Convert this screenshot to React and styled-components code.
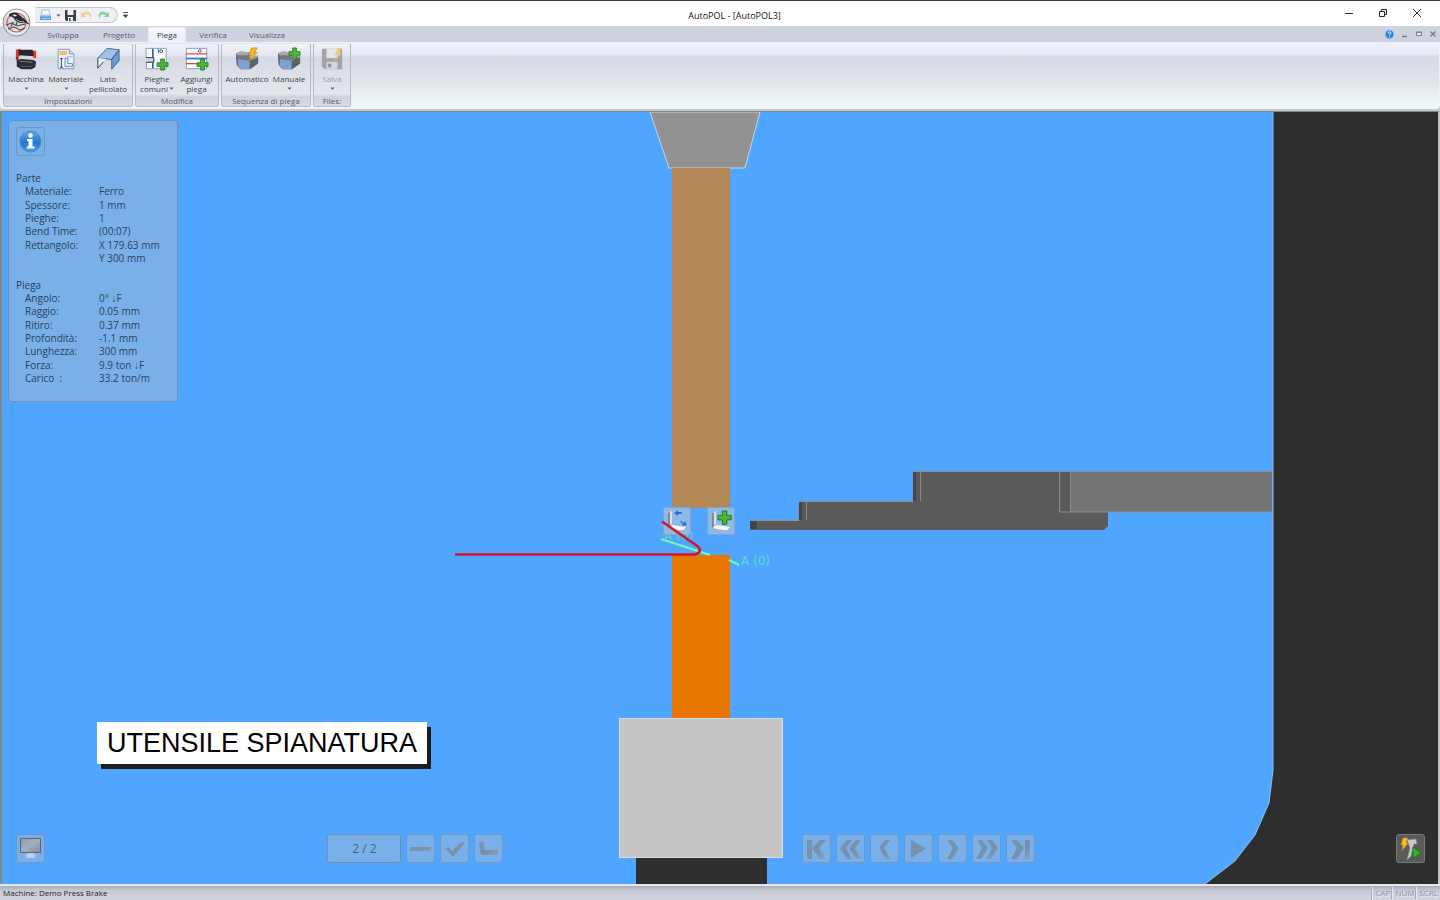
import React from "react";
import styled, { createGlobalStyle } from "styled-components";

const Global = createGlobalStyle`
  * { box-sizing: border-box; }
  body { margin: 0; font-family: "Open Sans", "Noto Sans", sans-serif; color: #2c2f36; }
  button { font: inherit; color: inherit; padding: 0; margin: 0; background: none; border: 0; cursor: pointer; }
  h1, h2, dl, dd, dt, p { margin: 0; font: inherit; }
  svg { display: block; flex: none; }
`;

const Window = styled.div`
  display: flex;
  flex-direction: column;
  min-height: 100vh;
  background: #c6c9d2;
`;

const Header = styled.header`
  display: grid;
  grid-template-columns: 35px 1fr;
  grid-template-rows: 26px 15px;
  border-top: 1px solid #3a3a3c;
  background: linear-gradient(#ffffff 25px, #cfd3df 25px);
`;

const AppButton = styled.button`
  grid-row: 1 / 3;
  display: grid;
  place-items: start;
  padding: 7px 0 0 2px;
`;

const TitleBar = styled.div`
  display: grid;
  grid-template-columns: 1fr auto 1fr;
  align-items: center;
  padding-top: 2px;
`;

const Title = styled.h1`
  font-size: 9px;
  line-height: 12px;
  color: #111;
  padding-top: 2px;
  margin-left: -6px;
`;

const QuickBar = styled.div`
  display: flex;
  align-items: center;
  gap: 5px;
`;

const QuickPill = styled.div`
  display: flex;
  align-items: center;
  gap: 4px;
  height: 16px;
  padding: 0 7px 0 4px;
  border: 1px solid #c3c6cd;
  border-left: 0;
  border-radius: 0 8px 8px 0;
  background: #eef0f5;
`;

const WindowControls = styled.div`
  display: flex;
  justify-content: flex-end;
  padding: 0 17px 4px 0;
  gap: 22px;
`;

const TabRow = styled.div`
  display: flex;
  justify-content: space-between;
  align-items: stretch;
  padding-right: 3px;
`;

const Tabs = styled.nav`
  display: flex;
  padding-left: 1px;
`;

const Tab = styled.button`
  width: ${(p) => p.$width}px;
  font-size: 8px;
  line-height: 12px;
  padding-bottom: 1px;
  color: ${(p) => (p.$active ? "#33363d" : "#565b68")};
  border: 1px solid ${(p) => (p.$active ? "#e4e9f2" : "transparent")};
  border-bottom: 0;
  border-radius: 2px 2px 0 0;
  background: ${(p) => (p.$active ? "linear-gradient(#f7fafd, #eaf0f8)" : "none")};
`;

const DocControls = styled.div`
  display: flex;
  align-items: center;
  gap: 6px;
  padding-bottom: 1px;
`;

const Ribbon = styled.div`
  display: flex;
  gap: 2px;
  height: 67px;
  padding: 0 2px;
  border: 1px solid #eef1f6;
  border-radius: 0 0 3px 3px;
  background: linear-gradient(#eff1f9 0, #e6e9f3 11px, #d5d9e4 14px, #dfe4e9 38px, #f2fafa 65px);
`;

const Group = styled.section`
  display: flex;
  flex-direction: column;
  justify-content: space-between;
  width: ${(p) => p.$width}px;
  height: 64px;
  border: 1px solid #b4b8c1;
  border-top-color: #e2e5ec;
  border-radius: 3px;
  background: linear-gradient(#f1f3fa 0, #e3e6ef 11px, #d5d9e3 14px, #e4e8ec 50px, #cdd1da 53px, #d9dce3);
`;

const GroupTools = styled.div`
  display: flex;
  justify-content: center;
`;

const GroupLabel = styled.h2`
  font-size: 8px;
  line-height: 11px;
  text-align: center;
  color: #555a66;
`;

const Tool = styled.button`
  display: flex;
  flex-direction: column;
  align-items: center;
  width: ${(p) => p.$width}px;
  font-size: 8px;
  line-height: 10px;
  padding-top: 3px;
  white-space: nowrap;
  color: ${(p) => (p.$muted ? "#9a9ea8" : "#3d4250")};
  & > svg { width: 24px; height: 24px; margin-bottom: 3px; }
`;

const SecondLine = styled.span`
  display: flex;
  align-items: center;
  height: 9px;
  line-height: 9px;
  gap: 1px;
`;

const Workspace = styled.main`
  flex: 1;
  display: grid;
  grid-template-rows: minmax(0, 1fr);
  grid-template-columns: minmax(0, 1fr);
  margin-top: 2px;
  border: solid #7f8791;
  border-width: 1px 2px 0 2px;
  border-right-color: #c4c6cc;
  background: #50a6ff;
`;

const Canvas = styled.div`
  grid-area: 1 / 1;
  display: grid;
  position: relative;
  & > svg { width: 100%; height: 100%; }
`;

const PieceLayer = styled.svg`
  position: absolute;
  inset: 0;
  pointer-events: none;
`;

const CanvasButton = styled.button`
  position: absolute;
  top: ${(p) => p.$top}px;
  left: calc(50% + ${(p) => p.$dx}px);
  width: 28px;
  height: 28px;
  border: 1px solid #86a5c8;
  border-radius: 2px;
  background: rgba(155, 190, 228, 0.8);
`;

const Overlay = styled.div`
  grid-area: 1 / 1;
  z-index: 1;
  display: flex;
  flex-direction: column;
  align-items: flex-start;
  padding: 8px 13px 21px 6px;
  pointer-events: none;
  & button { pointer-events: auto; }
`;

const InfoPanel = styled.section`
  display: flex;
  flex-direction: column;
  width: 170px;
  height: 282px;
  padding: 6px 7px 16px;
  border: 1px solid #7390b2;
  border-radius: 4px;
  background: #7ab0e9;
  font-size: 10px;
  color: #29415c;
`;

const GlassButton = styled.button`
  display: grid;
  place-items: center;
  width: 29px;
  height: 29px;
  border: 1px solid ${(p) => (p.$dark ? "#7a7a7a" : "#7497bd")};
  border-radius: 3px;
  background: ${(p) => (p.$dark ? "#5a5a5a" : "#7ab0e9")};
`;

const InfoList = styled.dl`
  flex: 1;
  display: grid;
  grid-template-columns: 74px 1fr;
  grid-auto-rows: minmax(0, 1fr);
  align-items: center;
  line-height: 13px;
  padding: 16px 0 0 9px;
`;

const InfoHeading = styled.dt`
  grid-column: 1 / 3;
  margin-left: -9px;
`;

const InfoLabel = styled.dt`
  white-space: pre;
`;

const InfoValue = styled.dd`
  grid-column: 2;
  white-space: nowrap;
`;

const Caption = styled.p`
  margin: auto 0 70px 89px;
  padding: 0 10px;
  background: #fff;
  box-shadow: 4px 5px 0 #1d1d1f;
  color: #000;
  font: 27px/42px "Liberation Sans", Arial, sans-serif;
`;

const BottomBar = styled.div`
  align-self: stretch;
  display: grid;
  grid-template-columns: 311fr 474fr 593fr auto;
  padding-left: 8px;
`;

const ButtonRow = styled.div`
  display: flex;
  gap: 5px;
`;

const Counter = styled.output`
  width: 74px;
  height: 29px;
  border: 1px solid #7390b2;
  border-radius: 3px;
  background: #7ab0e9;
  color: #45617f;
  font-size: 12px;
  line-height: 27px;
  text-align: center;
`;

const StatusBar = styled.footer`
  display: flex;
  justify-content: space-between;
  align-items: flex-end;
  height: 16px;
  padding: 0 0 1px 3px;
  font-size: 8px;
  line-height: 12px;
  color: #1f2127;
  border-top: 2px solid #e6e8ee;
  background: linear-gradient(#a9adb9, #c9ccd6 5px, #d2d5dd);
`;

const Keys = styled.div`
  display: flex;
`;

const Key = styled.span`
  padding: 0 2px;
  border-left: 1px solid #e8eaf0;
  box-shadow: -1px 0 0 #a9adb8;
  color: #8e919b;
  text-shadow: 1px 1px 0 #eceef3;
`;

const Caret = () => (
  <svg width="5" height="9" viewBox="0 0 5 9"><path d="M0.5 3.500h4L2.500 5.700z" fill="#555a66" /></svg>
);

const Logo = () => (
  <svg width="29" height="29" viewBox="0 0 29 29">
    <defs>
      <linearGradient id="orb" x1="0" y1="0" x2="0" y2="1">
        <stop offset="0" stopColor="#ffffff" /><stop offset=".5" stopColor="#d2d2d5" /><stop offset="1" stopColor="#f0f0f0" />
      </linearGradient>
    </defs>
    <circle cx="14.500" cy="14.500" r="13.500" fill="url(#orb)" stroke="#8b8e95" />
    <circle cx="14.500" cy="14.500" r="9.500" fill="none" stroke="#c4666a" strokeWidth="1.200" />
    <path d="M7 6.500c3-2.500 7-2.500 9.500-.5 2 2 4 3.500 7 6l4 4.500-5-2c-3 1-7 .5-9.500-2.500C11.500 9 9.500 8 7 8.500z" fill="#2a2c30" />
    <path d="M10 7c2-1 4-.5 5 .8l-2 .7z" fill="#e8e8ea" />
    <path d="M14 11c2 2.500 5 3 8 2.500" stroke="#c9cacd" fill="none" strokeWidth=".8" />
    <path d="M4 17l6-2 5 3 8-2M6 21l6-2 6 3 5-2M11 14l-2 5M15 14l-1 4" fill="none" stroke="#4a4c51" strokeWidth="1.100" />
  </svg>
);

const PrinterIcon = () => (
  <svg width="13" height="12" viewBox="0 0 13 12">
    <path d="M3 1h7l1 5H2z" fill="#fafcff" stroke="#9bb0cc" strokeWidth=".8" />
    <path d="M1 6h11v5H1z" fill="#5b9be0" /><path d="M1 6h11v1.500H1zM2 9h9v1H2z" fill="#a8cbf2" />
  </svg>
);

const DiskIcon = ({ size = 11, color = "#3e4046", light = "#f2f2f4" }) => (
  <svg width={size} height={size} viewBox="0 0 11 11">
    <path d="M0 0h11v11H1.500L0 9.500z" fill={color} />
    <path d="M2.500 0h6v5h-6z" fill={light} />
    <path d="M3 7h5v4H3z" fill={light} /><path d="M4 8h1.500v3H4z" fill={color} />
  </svg>
);

const ArrowBack = ({ color, flip }) => (
  <svg width="13" height="11" viewBox="0 0 13 11">
    <g transform={flip ? "translate(13 0) scale(-1 1)" : undefined}>
      <path d="M1 2v5h5L4.300 5.300C7 3.200 10 4.500 10.500 8.500 13.500 3 7.500-.5 2.800 3.600z" fill={color} />
    </g>
  </svg>
);

const MachineIcon = () => (
  <svg viewBox="0 0 26 26">
    <path d="M2 3l5-1v8H2zM19 4h5v8h-5z" fill="#e03a2c" />
    <path d="M5 3h15l1 3v4H5z" fill="#25262a" /><path d="M6 9l15 1v3H6z" fill="#d3d5da" />
    <path d="M3 14l5-1 13 1 3 2-1 6-4 2H8l-5-3z" fill="#2b2d31" />
    <path d="M6 15.500l14 1" stroke="#7d8087" /><path d="M7 21h12" stroke="#5a5d63" /><path d="M2 10h3v4H2z" fill="#9c2a22" />
  </svg>
);

const MaterialIcon = () => (
  <svg viewBox="0 0 26 26">
    <path d="M4.500 2.500h12l5 5v16h-17z" fill="#eaf2fc" stroke="#7196c4" />
    <path d="M16.500 2.500v5h5" fill="#c9dcf3" stroke="#7196c4" />
    <path d="M6 4.500h8v4H6z" fill="#f3b13c" /><path d="M7 6.500h1.500m1.500 0h1m1 0h1" stroke="#fff" />
    <path d="M8 12v10M6.500 12.500h3M6.500 22h3" stroke="#333b4c" fill="none" />
    <path d="M12 12v9h8M15 12v6h5M12 12h3M20 18v3" stroke="#6084b0" fill="none" />
    <path d="M14 10.500h6" stroke="#8fb0d8" />
  </svg>
);

const ProfileIcon = () => (
  <svg viewBox="0 0 26 26">
    <path d="M12 1.500L25 3l-8 10.500L2 12z" fill="#9fc2ec" stroke="#3b5375" strokeWidth=".9" />
    <path d="M25 3v12l-8 9V13.500z" fill="#6b9cd8" stroke="#3b5375" strokeWidth=".9" />
    <path d="M2 12v11l9-10z" fill="#eef2f8" /><path d="M2 12v11l6-7" fill="none" stroke="#24364e" />
  </svg>
);

const Plus = ({ x, y, s = 1 }) => (
  <path transform={`translate(${x} ${y}) scale(${s})`} d="M4 0h4v4h4v4H8v4H4V8H0V4h4z" fill="#4cb83a" stroke="#20781d" strokeWidth=".9" />
);

const CommonBendsIcon = () => (
  <svg viewBox="0 0 26 26">
    <path d="M1 1.500h22v22H1.500v-7h8v-5h-8z" fill="#fafbfd" stroke="#8a99b2" />
    <path d="M8.500 2v9M8.500 17v6" stroke="#2868a8" strokeWidth="1.800" />
    <path d="M1 11.500h8.500v5H1" fill="none" stroke="#39404c" /><path d="M14.500 2v5" stroke="#2868a8" />
    <circle cx="17.500" cy="4.500" r="1.600" fill="none" stroke="#444" />
    <Plus x={13} y={13} />
  </svg>
);

const AddBendIcon = () => (
  <svg viewBox="0 0 26 26">
    <path d="M1.500 1.500h22v22h-22z" fill="#fafbfd" stroke="#8a99b2" />
    <path d="M1 7.500h23M1 18h14" stroke="#df4a44" strokeWidth="1.500" />
    <path d="M1 12.500h23" stroke="#2f7fd0" strokeWidth="2" />
    <circle cx="16" cy="4.300" r="1.500" fill="none" stroke="#555" />
    <Plus x={13} y={13} />
  </svg>
);

const Brake = () => (
  <>
    <path d="M1 7l5-2 10 1v5l9-1v8l-9 6H6l-4-4z" fill="#72767e" />
    <path d="M1 7l5-2 10 1-2 3H3z" fill="#a5a8af" /><path d="M16 11l9-2v3l-9 3z" fill="#a0a3aa" />
    <path d="M3 13l13 2v9H7l-4-4z" fill="#7da2d2" /><path d="M16 15l9-4v7l-9 6z" fill="#5d6169" />
    <path d="M1 7l2 6v7l-1-1z" fill="#5d6169" />
  </>
);

const AutoIcon = () => (
  <svg viewBox="0 0 26 26">
    <Brake />
    <path d="M18 1h6l-3 5h3l-9 10 3-7h-3z" fill="#fbb829" stroke="#c47a12" strokeWidth=".7" />
  </svg>
);

const ManualIcon = () => (
  <svg viewBox="0 0 26 26">
    <Brake />
    <Plus x={13} y={1} />
  </svg>
);

const SaveIcon = () => (
  <svg viewBox="0 0 26 26">
    <path d="M2 2h22v22H5l-3-3z" fill="#a2a4aa" /><path d="M7 2h12v10H7z" fill="#e4e5e9" />
    <path d="M7 16h12v8H7z" fill="#d3d4d8" /><path d="M9 18h3v4H9z" fill="#8a8c92" />
    <path d="M19 1h5l-3 5h3l-8 9 2-6h-2z" fill="#e8cb84" />
  </svg>
);

const InfoIcon = () => (
  <svg width="23" height="23" viewBox="0 0 23 23">
    <defs>
      <linearGradient id="ball" x1="0" y1="0" x2="0" y2="1">
        <stop offset="0" stopColor="#6aa8e4" /><stop offset=".55" stopColor="#2178cc" /><stop offset="1" stopColor="#4da2ea" />
      </linearGradient>
    </defs>
    <circle cx="11.500" cy="11.500" r="10.500" fill="url(#ball)" stroke="#4c86c2" />
    <circle cx="11.500" cy="5.500" r="2.200" fill="#fff" />
    <path d="M8 9h5.500v7.500H15.500V18.500H8v-2h1.500v-5.500H8z" fill="#fff" />
  </svg>
);

const MonitorIcon = () => (
  <svg width="23" height="23" viewBox="0 0 23 23">
    <defs>
      <linearGradient id="screen" x1="0" y1="0" x2="1" y2="1">
        <stop offset="0" stopColor="#8f9dad" /><stop offset=".5" stopColor="#a3afbc" /><stop offset="1" stopColor="#7e8b99" />
      </linearGradient>
    </defs>
    <path d="M1.500 1.500h20v14h-20z" fill="url(#screen)" stroke="#566577" />
    <path d="M8 16h7v2h2l-2 3H8l-2-3h2z" fill="#b8d0ea" />
  </svg>
);

const RunIcon = () => (
  <svg width="27" height="27" viewBox="0 0 27 27">
    <path d="M10 5l9-1 1 5h-3l-1 3-2 9-4 4 3-12z" fill="#c6c8ca" stroke="#8d9093" strokeWidth=".7" />
    <path d="M6 3h5L9 8h2L5 16l1-6H4z" fill="#f8bb1e" stroke="#d9761b" strokeWidth=".6" />
    <path d="M16 12l8 6-8 5z" fill="#2fb52f" stroke="#147514" strokeWidth=".7" />
  </svg>
);

const shapes = {
  minus: "M3 12h21v4H3z",
  check: "M4 13l4-1 3 4 9-9 4 1-12 14z",
  angle: "M4 8l4-2 2 9h13v5H9c-3 0-4-1-4-4z",
  first: "M4 5h5v19H4zM17 5h6l-7 8 7 11h-6L9 13z",
  rewind: "M10 5h5l-6 8 6 11h-5L3 13zM19 5h5l-6 8 6 11h-5l-7-11z",
  prev: "M14 5h5l-6 8 7 11h-5L8 13z",
  play: "M6 5l15 8.500L6 23z",
  next: "M8 5h5l7 8-7 11H8l6-11z",
  forward: "M4 5h5l6 8-7 11H3l6-11zM14 5h5l6 8-7 11h-5l6-11z",
  last: "M4 5h6l7 8-7 11H4l6-11zM18 5h5v19h-5z",
};

const Glyph = ({ name }) => (
  <svg width="27" height="27" viewBox="0 0 27 27">
    <defs>
      <linearGradient id="metal" x1="0" y1="0" x2="1" y2="1">
        <stop offset="0" stopColor="#7295b9" /><stop offset=".6" stopColor="#7890a8" /><stop offset="1" stopColor="#8ba2b8" />
      </linearGradient>
    </defs>
    <path d={shapes[name]} fill="url(#metal)" />
  </svg>
);

const SheetEdge = () => (
  <>
    <path d="M4 5l4-2v13l-4 2z" fill="#dcdfec" />
    <path d="M4 5v15l2-1V4z" fill="#8a8794" />
    <path d="M5 19l4-2 13 2-3 4-11-1z" fill="#f5f7fb" /><path d="M6 21l12 2 3-1" fill="none" stroke="#a7a6b0" />
  </>
);

const Scene = () => (
  <svg viewBox="2 112 1436 772" preserveAspectRatio="xMidYMid slice" role="img" aria-label="Press brake side view">
    <path d="M1273 112v658l-4 33-14 32-20 26-30 23h233V112z" fill="#2e2e2e" />
    <path d="M1273 112v658l-4 33-14 32-20 26-30 23" fill="none" stroke="#8ec0ee" />
    <path d="M650 112h110l-15 56h-76z" fill="#929292" stroke="#c8d2dc" />
    <path d="M672 168h58v340h-58z" fill="#b48757" />
    <path d="M672 555h58v163h-58z" fill="#e67600" />
    <path d="M619.500 718.500h163v139h-163z" fill="#c5c5c5" stroke="#dadde0" />
    <path d="M636 858h131v26H636z" fill="#2e2e2e" />
    <path d="M750 520h49v-19h114v-30h359v41h-164v14l-4 4H750z" fill="#5a5a5a" />
    <path d="M1070 472h202v40h-202z" fill="#747474" />
    <path d="M750 520.500h49v-19h114v-30h359M1059.500 472v40H1272" fill="none" stroke="#8b9096" />
    <path d="M806.500 502v18M920.500 472v29M1070.500 472v40" stroke="#8a8a8a" />
    <path d="M750 521h7v8h-7zM799 502h3v18h-3zM913 472h3v29h-3z" fill="#42464c" />
  </svg>
);

const Workpiece = () => (
  <PieceLayer viewBox="2 112 1436 772" preserveAspectRatio="xMidYMid slice">
    <path d="M661 539l49 16M729 560l10 5" stroke="#6dfbb4" strokeWidth="2" />
    <text x="664" y="540" fontFamily="DejaVu Sans, sans-serif" fontSize="12" fill="#7fd0b8" opacity=".8">A (0)</text>
    <path d="M455 554.500h238c6 0 9-4 5-8l-36-25" fill="none" stroke="#d5142b" strokeWidth="2.500" />
    <text x="741" y="565" fontFamily="DejaVu Sans, sans-serif" fontSize="12" fill="#5fdcc6">A (0)</text>
  </PieceLayer>
);

const part = [
  ["Materiale:", "Ferro"],
  ["Spessore:", "1 mm"],
  ["Pieghe:", "1"],
  ["Bend Time:", "(00:07)"],
  ["Rettangolo:", "X 179.63 mm"],
  [null, "Y 300 mm"],
];

const bend = [
  ["Angolo:", "0° ↓F"],
  ["Raggio:", "0.05 mm"],
  ["Ritiro:", "0.37 mm"],
  ["Profondità:", "-1.1 mm"],
  ["Lunghezza:", "300 mm"],
  ["Forza:", "9.9 ton ↓F"],
  ["Carico  :", "33.2 ton/m"],
];

const InfoRows = ({ rows }) =>
  rows.map(([label, value]) => (
    <React.Fragment key={value}>
      {label && <InfoLabel>{label}</InfoLabel>}
      <InfoValue>{value}</InfoValue>
    </React.Fragment>
  ));

const tabs = [["Sviluppa", 54], ["Progetto", 58], ["Piega", 38], ["Verifica", 54], ["Visualizza", 54]];

const groups = [
  { name: "Impostazioni", width: 130, tools: [
    { label: "Macchina", icon: MachineIcon, width: 40, caret: true },
    { label: "Materiale", icon: MaterialIcon, width: 40, caret: true },
    { label: "Lato", second: "pellicolato", icon: ProfileIcon, width: 44 },
  ] },
  { name: "Modifica", width: 84, tools: [
    { label: "Pieghe", second: "comuni", icon: CommonBendsIcon, width: 39, caret: true },
    { label: "Aggiungi", second: "piega", icon: AddBendIcon, width: 40 },
  ] },
  { name: "Sequenza di piega", width: 90, tools: [
    { label: "Automatico", icon: AutoIcon, width: 46 },
    { label: "Manuale", icon: ManualIcon, width: 38, caret: true },
  ] },
  { name: "Files:", width: 38, tools: [
    { label: "Salva", icon: SaveIcon, width: 34, caret: true, muted: true },
  ] },
];

export default function App() {
  return (
    <Window>
      <Global />
      <Header>
        <AppButton aria-label="AutoPOL"><Logo /></AppButton>
        <TitleBar>
          <QuickBar>
            <QuickPill>
              <button aria-label="Apri"><PrinterIcon /></button>
              <button aria-label="Altri"><Caret /></button>
              <button aria-label="Salva"><DiskIcon /></button>
              <button aria-label="Annulla"><ArrowBack color="#efcf98" /></button>
              <button aria-label="Ripeti"><ArrowBack color="#7fd39b" flip /></button>
            </QuickPill>
            <button aria-label="Personalizza">
              <svg width="5" height="8" viewBox="0 0 5 8"><path d="M0 1.500h5M.5 4h4L2.500 6.500z" stroke="#444" strokeWidth=".9" fill="#444" /></svg>
            </button>
          </QuickBar>
          <Title>AutoPOL - [AutoPOL3]</Title>
          <WindowControls>
            <button aria-label="Riduci"><svg width="12" height="12" viewBox="0 0 12 12"><path d="M2 6.500h8" stroke="#333" /></svg></button>
            <button aria-label="Ripristina"><svg width="12" height="12" viewBox="0 0 12 12"><path d="M2.500 4.500h5v5h-5zM4.500 4V2.500h5v5H8" stroke="#222" fill="none" /></svg></button>
            <button aria-label="Chiudi"><svg width="12" height="12" viewBox="0 0 12 12"><path d="M2 2l8 8M10 2l-8 8" stroke="#333" /></svg></button>
          </WindowControls>
        </TitleBar>
        <TabRow>
          <Tabs>
            {tabs.map(([name, width]) => (
              <Tab key={name} $width={width} $active={name === "Piega"}>{name}</Tab>
            ))}
          </Tabs>
          <DocControls>
            <button aria-label="Guida">
              <svg width="11" height="11" viewBox="0 0 11 11"><circle cx="5.500" cy="5.500" r="4.500" fill="#2d86d8" stroke="#a9cdf0" /><path d="M4 4.200c.2-2 3.200-1.600 2.800.1-.2.800-1.300.9-1.300 2M5.500 7.500v1" stroke="#fff" fill="none" /></svg>
            </button>
            <button aria-label="Riduci documento"><svg width="8" height="8" viewBox="0 0 8 8"><path d="M1 6.500h5" stroke="#777b85" strokeWidth="1.500" /></svg></button>
            <button aria-label="Ripristina documento"><svg width="8" height="8" viewBox="0 0 8 8"><path d="M1.500 2.500h5v3h-5zM1 2h6" stroke="#777b85" fill="#e8eaf0" /></svg></button>
            <button aria-label="Chiudi documento"><svg width="8" height="8" viewBox="0 0 8 8"><path d="M1.500 1.500l5 5M6.500 1.500l-5 5" stroke="#777b85" strokeWidth="1.300" /></svg></button>
          </DocControls>
        </TabRow>
      </Header>

      <Ribbon>
        {groups.map((g) => (
          <Group key={g.name} $width={g.width}>
            <GroupTools>
              {g.tools.map(({ label, second, icon: Icon, width, caret, muted }) => (
                <Tool key={label} $width={width} $muted={muted}>
                  <Icon />
                  {label}
                  <SecondLine>{second}{caret && <Caret />}</SecondLine>
                </Tool>
              ))}
            </GroupTools>
            <GroupLabel>{g.name}</GroupLabel>
          </Group>
        ))}
      </Ribbon>

      <Workspace>
        <Canvas>
          <Scene />
          <CanvasButton $top={395} $dx={-57} aria-label="Sposta pezzo">
            <svg width="26" height="26" viewBox="0 0 26 26">
              <SheetEdge />
              <path d="M10 5l4-3v2h4v2h-4v2zM23 17l-5 1 1-2-3-2 1-1 3 2 1-2z" fill="#2a6fd4" />
            </svg>
          </CanvasButton>
          <CanvasButton $top={395} $dx={-13} aria-label="Aggiungi utensile">
            <svg width="26" height="26" viewBox="0 0 26 26"><SheetEdge /><Plus x={10} y={3} s={1.1} /></svg>
          </CanvasButton>
          <Workpiece />
        </Canvas>
        <Overlay>
          <InfoPanel>
            <GlassButton aria-label="Informazioni"><InfoIcon /></GlassButton>
            <InfoList>
              <InfoHeading>Parte</InfoHeading>
              <InfoRows rows={part} />
              <InfoHeading aria-hidden="true">&nbsp;</InfoHeading>
              <InfoHeading>Piega</InfoHeading>
              <InfoRows rows={bend} />
            </InfoList>
          </InfoPanel>
          <Caption>UTENSILE SPIANATURA</Caption>
          <BottomBar>
            <div><GlassButton aria-label="Vista"><MonitorIcon /></GlassButton></div>
            <ButtonRow>
              <Counter>2 / 2</Counter>
              {["minus", "check", "angle"].map((n) => (
                <GlassButton key={n} aria-label={n}><Glyph name={n} /></GlassButton>
              ))}
            </ButtonRow>
            <ButtonRow>
              {["first", "rewind", "prev", "play", "next", "forward", "last"].map((n) => (
                <GlassButton key={n} aria-label={n}><Glyph name={n} /></GlassButton>
              ))}
            </ButtonRow>
            <GlassButton $dark aria-label="Esegui"><RunIcon /></GlassButton>
          </BottomBar>
        </Overlay>
      </Workspace>

      <StatusBar>
        <span>Machine: Demo Press Brake</span>
        <Keys><Key>CAP</Key><Key>NUM</Key><Key>SCRL</Key></Keys>
      </StatusBar>
    </Window>
  );
}
